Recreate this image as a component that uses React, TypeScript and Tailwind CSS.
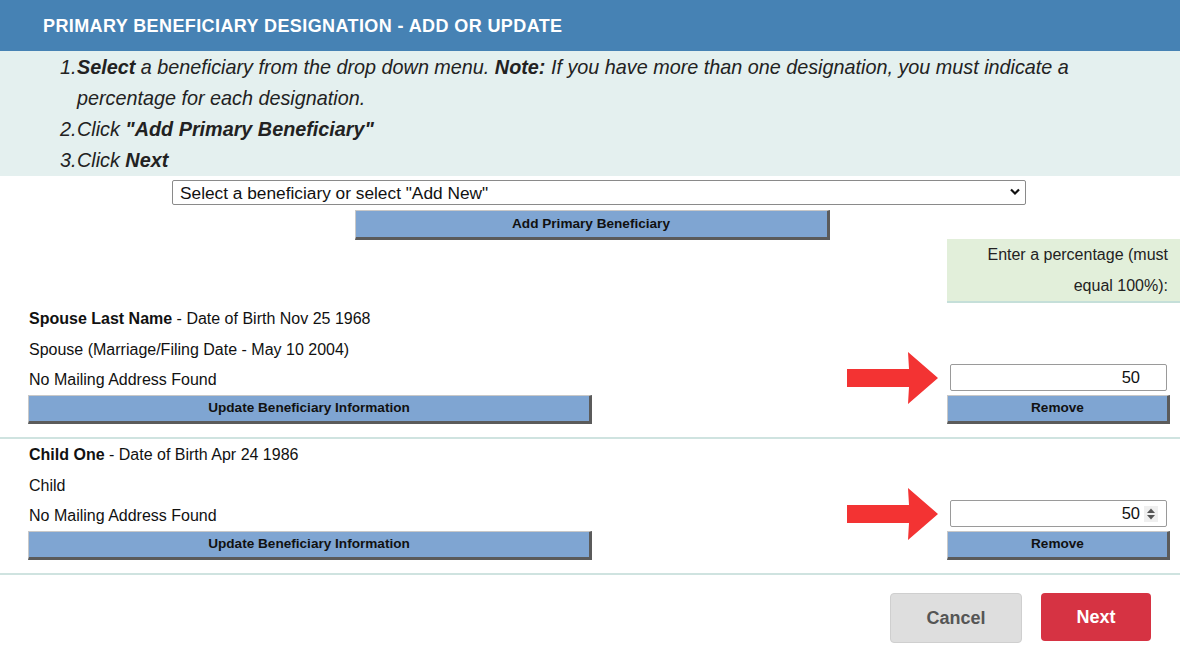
import { useState } from 'react';

const beneficiaries = [
  {
    name: 'Spouse Last Name',
    dob: 'Nov 25 1968',
    relation: 'Spouse (Marriage/Filing Date - May 10 2004)',
    pct: '50',
    spinner: false,
  },
  {
    name: 'Child One',
    dob: 'Apr 24 1986',
    relation: 'Child',
    pct: '50',
    spinner: true,
  },
];

function RedArrow() {
  return (
    <svg
      className="absolute left-[-103px] top-1/2 -translate-y-1/2"
      width="92"
      height="52"
      viewBox="0 0 92 52"
    >
      <polygon
        points="0,17 62,17 61,0 91,26 61,52 62,35 0,35"
        fill="#f33333"
      />
    </svg>
  );
}

function BevelButton({
  children,
  className,
}: {
  children: React.ReactNode;
  className: string;
}) {
  return (
    <button
      className={`bg-[#7fa5d2] border-t border-l border-t-[#c8c8c8] border-l-[#c8c8c8] border-r-[3px] border-b-[3px] border-r-[#5b5b5b] border-b-[#5b5b5b] text-[13.6px] font-bold text-[#111] ${className}`}
    >
      {children}
    </button>
  );
}

export default function App() {
  const [choice, setChoice] = useState('');

  return (
    <div
      className="w-[1180px] h-[649px] bg-white text-[#111] overflow-hidden"
      style={{ fontFamily: '"Liberation Sans", Arial, sans-serif' }}
    >
      {/* Header */}
      <div className="h-[51px] bg-[#4682b4] flex items-center pl-[43px] pt-[2px]">
        <h1 className="text-white font-bold text-[18px] tracking-[0.4px]">
          PRIMARY BENEFICIARY DESIGNATION - ADD OR UPDATE
        </h1>
      </div>

      {/* Instructions */}
      <div className="bg-[#e4f0ef] italic text-[19.8px] leading-[31px] text-[#222] pt-px">
        <div className="flex pl-[60px]">
          <span className="w-[17px] shrink-0">1.</span>
          <span className="w-[1010px]">
            <b>Select</b> a beneficiary from the drop down menu.{' '}
            <b>Note:</b> If you have more than one designation, you must
            indicate a percentage for each designation.
          </span>
        </div>
        <div className="flex pl-[60px]">
          <span className="w-[17px] shrink-0">2.</span>
          <span>
            Click <b>"Add Primary Beneficiary"</b>
          </span>
        </div>
        <div className="flex pl-[60px]">
          <span className="w-[17px] shrink-0">3.</span>
          <span>
            Click <b>Next</b>
          </span>
        </div>
      </div>

      {/* Select + add */}
      <div className="flex flex-col items-center mt-[4px]">
        <div className="relative w-[854px] ml-[18px]">
          <select
            value={choice}
            onChange={(e) => setChoice(e.target.value)}
            className="w-full h-[25px] appearance-none border border-[#8a8a8a] rounded-[2px] bg-white pl-[7px] text-[17.3px] text-[#111]"
          >
            <option value="">Select a beneficiary or select "Add New"</option>
            <option value="new">Add New</option>
          </select>
          <svg
            className="absolute right-[6px] top-[8px] pointer-events-none"
            width="10"
            height="8"
            viewBox="0 0 10 8"
          >
            <path
              d="M1 1.5 L5 5.5 L9 1.5"
              stroke="#111"
              strokeWidth="2.2"
              fill="none"
            />
          </svg>
        </div>
        <BevelButton className="w-[475px] h-[30px] mt-[4px] ml-[4px]">
          Add Primary Beneficiary
        </BevelButton>
      </div>

      {/* Percentage header */}
      <div className="flex justify-end -mt-px">
        <div className="w-[233px] bg-[#e2efda] border-b-2 border-[#c5dfd9] text-right pr-[12px] text-[16px] leading-[31px] text-[#222]">
          Enter a percentage (must
          <br />
          equal 100%):
        </div>
      </div>

      {/* Beneficiary rows */}
      {beneficiaries.map((b) => (
        <div key={b.name}>
          <div className="flex justify-between pb-[13px]">
            <div className="pl-[28px] w-[592px]">
              <div className="text-[16px] leading-[31px] pl-px">
                <span className="font-bold">{b.name}</span> - Date of Birth{' '}
                {b.dob}
              </div>
              <div className="text-[16px] leading-[31px] pl-px">
                {b.relation}
              </div>
              <div className="text-[16px] leading-[30px] pl-px">
                No Mailing Address Found
              </div>
              <BevelButton className="w-full h-[29px]">
                Update Beneficiary Information
              </BevelButton>
            </div>
            <div className="w-[233px] flex flex-col justify-end">
              <div className="relative ml-[3px] w-[217px]">
                <RedArrow />
                <input
                  readOnly
                  value={b.pct}
                  className="w-full h-[27px] border border-[#9a9a9a] rounded-[2px] bg-white text-right text-[16.5px] pr-[26px]"
                />
                {b.spinner && (
                  <svg
                    className="absolute right-[9px] top-[6px]"
                    width="14"
                    height="16"
                    viewBox="0 0 14 16"
                  >
                    <rect width="14" height="16" fill="#efefef" />
                    <polygon points="3,7 7,2.5 11,7" fill="#555" />
                    <polygon points="3,9 7,13.5 11,9" fill="#555" />
                  </svg>
                )}
              </div>
              <BevelButton className="w-[223px] h-[29px] mt-[4px]">
                Remove
              </BevelButton>
            </div>
          </div>
          <div className="h-[2px] bg-[#cfe3e0]" />
        </div>
      ))}

      {/* Footer actions */}
      <div className="flex justify-end gap-[19px] pr-[29px] mt-[18px]">
        <button className="w-[132px] h-[50px] rounded-[4px] bg-[#dedede] border border-[#cfcfcf] text-[18px] font-bold text-[#555]">
          Cancel
        </button>
        <button className="w-[110px] h-[48px] rounded-[4px] bg-[#d63343] text-[18px] font-bold text-white">
          Next
        </button>
      </div>
    </div>
  );
}
